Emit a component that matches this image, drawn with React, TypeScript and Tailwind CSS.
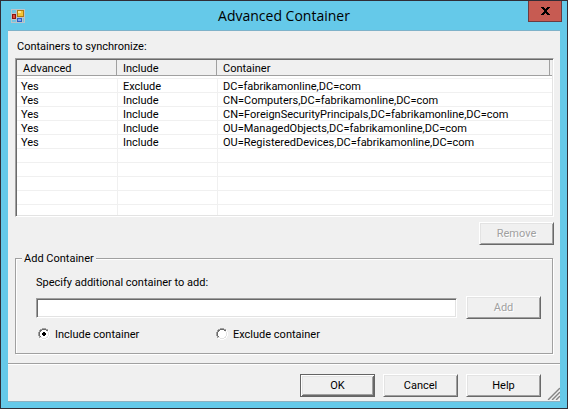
import { useState } from "react";
import type { ButtonHTMLAttributes } from "react";

const rows = [
  ["Yes", "Exclude", "DC=fabrikamonline,DC=com"],
  ["Yes", "Include", "CN=Computers,DC=fabrikamonline,DC=com"],
  ["Yes", "Include", "CN=ForeignSecurityPrincipals,DC=fabrikamonline,DC=com"],
  ["Yes", "Include", "OU=ManagedObjects,DC=fabrikamonline,DC=com"],
  ["Yes", "Include", "OU=RegisteredDevices,DC=fabrikamonline,DC=com"],
  ["", "", ""],
  ["", "", ""],
  ["", "", ""],
  ["", "", ""],
];

const raised =
  "border border-t-white border-l-white border-r-[#696969] border-b-[#696969] shadow-[inset_1px_1px_0_#e3e3e3,inset_-1px_-1px_0_#a0a0a0]";
const raisedDefault =
  "border border-[#646464] shadow-[inset_1px_1px_0_#ffffff,inset_-1px_-1px_0_#696969,inset_2px_2px_0_#e3e3e3,inset_-2px_-2px_0_#a0a0a0]";
const sunken =
  "border border-t-[#a0a0a0] border-l-[#a0a0a0] border-r-white border-b-white shadow-[inset_1px_1px_0_#696969,inset_-1px_-1px_0_#e3e3e3]";

function PushButton({
  primary = false,
  children,
  ...rest
}: ButtonHTMLAttributes<HTMLButtonElement> & { primary?: boolean }) {
  return (
    <button
      type="button"
      className={`flex h-[23px] w-[75px] shrink-0 items-center justify-center bg-[#f0f0f0] disabled:text-[#a0a0a0] disabled:[text-shadow:1px_1px_0_#ffffff] ${
        primary ? raisedDefault : raised
      }`}
      {...rest}
    >
      {children}
    </button>
  );
}

function Radio({
  label,
  checked,
  onSelect,
}: {
  label: string;
  checked: boolean;
  onSelect: () => void;
}) {
  return (
    <label className="relative flex w-[178px] items-center gap-1">
      <input
        type="radio"
        name="mode"
        checked={checked}
        onChange={onSelect}
        className="absolute inset-y-0 left-0 w-3 appearance-none"
      />
      <svg width="12" height="12" viewBox="0 0 12 12" shapeRendering="crispEdges" aria-hidden="true">
        <path d="M4 2h4v1h1v1h1v4h-1v1h-1v1h-4v-1h-1v-1h-1v-4h1v-1h1z" fill="#ffffff" />
        <path d="M4 0h4v1h-4zM2 1h2v1h-2zM8 1h2v1h-2zM1 2h1v2h-1zM0 4h1v4h-1zM1 8h1v2h-1z" fill="#a0a0a0" />
        <path d="M4 1h4v1h-4zM2 2h2v1h-2zM8 2h2v1h-2zM2 3h1v1h-1zM1 4h1v4h-1zM2 8h1v1h-1z" fill="#696969" />
        <path d="M9 3h1v1h-1zM10 4h1v4h-1zM9 8h1v1h-1zM2 9h2v1h-2zM8 9h2v1h-2zM4 10h4v1h-4z" fill="#e3e3e3" />
        <path d="M10 2h1v2h-1zM11 4h1v4h-1zM10 8h1v2h-1zM2 10h2v1h-2zM8 10h2v1h-2zM4 11h4v1h-4z" fill="#ffffff" />
        {checked && <path d="M5 4h2v1h1v2h-1v1h-2v-1h-1v-2h1z" fill="#000000" />}
      </svg>
      <span className="pt-0.5 pl-px leading-3">{label}</span>
    </label>
  );
}

function FormIcon() {
  return (
    <svg width="14" height="14" viewBox="0 0 14 14" shapeRendering="crispEdges" aria-hidden="true">
      <path d="M0 0h14v14h-14z" fill="#bcc3c8" />
      <path d="M1 1h4v3h-4zM1 11h4v2h-4zM12 9h1v4h-1z" fill="#74c4e0" />
      <path d="M6 1h7v7h-7z" fill="#b07a10" />
      <path d="M7 2h5v5h-5z" fill="#f5c535" />
      <path d="M7 2h3v2h-3z" fill="#ffe790" />
      <path d="M1 5h4v5h-4z" fill="#8c1210" />
      <path d="M2 6h2v3h-2z" fill="#dd4a38" />
      <path d="M6 9h5v4h-5z" fill="#2c5cc4" />
      <path d="M7 10h3v2h-3z" fill="#79a8f4" />
    </svg>
  );
}

export default function App() {
  const [mode, setMode] = useState("include");

  return (
    <div className="flex min-h-screen w-full flex-col border border-[#302d36] bg-[#65c9e9] px-[7px] pb-1.5 font-[Roboto,'Liberation_Sans',sans-serif] text-[11px] leading-[14px] text-black">
      <header className="grid h-[29px] grid-cols-[1fr_auto_1fr] items-center">
        <span className="pl-[3px]">
          <FormIcon />
        </span>
        <h1 className="font-['Open_Sans',sans-serif] text-[14px] leading-5">
          Advanced Container
        </h1>
        <button
          type="button"
          aria-label="Close"
          className="-mr-0.5 flex h-[21px] w-[34px] items-center justify-center self-start justify-self-end border border-t-0 border-[#6b3a40] bg-[#c75b52]"
        >
          <svg width="9" height="8" viewBox="0 0 9 8" shapeRendering="crispEdges" aria-hidden="true">
            <path
              d="M0 0h3v1h-3zM6 0h3v1h-3zM1 1h3v1h-3zM5 1h3v1h-3zM2 2h5v1h-5zM3 3h3v2h-3zM2 5h5v1h-5zM1 6h3v1h-3zM5 6h3v1h-3zM0 7h3v1h-3zM6 7h3v1h-3z"
              fill="#000000"
            />
          </svg>
        </button>
      </header>

      <main className="flex grow flex-col border-y border-t-[#7fb2c9] border-b-[#8fb0c0] bg-[#f0f0f0]">
        <section className="flex flex-col px-[7px] pt-[9px]">
          <h2 id="containers" className="pl-0.5">
            Containers to synchronize:
          </h2>
          <div className={`mt-1 mr-[-1px] bg-white p-px ${sunken}`}>
            <table aria-labelledby="containers" className="w-full table-fixed border-separate border-spacing-0 text-left">
              <colgroup>
                <col className="w-[100px]" />
                <col className="w-[100px]" />
                <col />
                <col className="w-0.5" />
              </colgroup>
              <thead>
                <tr className="h-4 leading-3">
                  {["Advanced", "Include", "Container"].map((name) => (
                    <th
                      key={name}
                      scope="col"
                      className="border-r border-b border-[#a0a0a0] bg-[#f0f0f0] p-0 pt-0.5 pl-1.5 font-normal"
                    >
                      {name}
                    </th>
                  ))}
                  <td className="border-b border-[#a0a0a0] bg-[#f0f0f0] p-0" />
                </tr>
                <tr className="h-[3px]">
                  <td colSpan={4} className="border-b border-[#f0f0f0] p-0" />
                </tr>
              </thead>
              <tbody>
                {rows.map(([advanced, include, container], i) => (
                  <tr key={i} className="h-3.5 leading-[11px]">
                    <td className="border-b border-[#f0f0f0] p-0 pt-0.5 pl-1">{advanced}</td>
                    <td className="border-b border-l border-[#f0f0f0] p-0 pt-0.5 pl-[5px]">{include}</td>
                    <td colSpan={2} className="border-b border-l border-[#f0f0f0] p-0 pt-0.5 pl-[5px]">
                      {container}
                    </td>
                  </tr>
                ))}
                <tr className="h-2.5">
                  <td className="p-0" />
                  <td className="border-l border-[#f0f0f0] p-0" />
                  <td colSpan={2} className="border-l border-[#f0f0f0] p-0" />
                </tr>
              </tbody>
            </table>
          </div>
          <div className="mt-[5px] mr-[-1px] flex justify-end">
            <PushButton disabled>Remove</PushButton>
          </div>
        </section>

        <fieldset className="mx-[7px] mt-1.5 border border-[#a0a0a0] px-5 pb-3 shadow-[1px_1px_0_#ffffff,inset_1px_1px_0_#ffffff]">
          <legend className="-ml-3.5 bg-[#f0f0f0] px-0.5 pt-0.5 leading-3">Add Container</legend>
          <label htmlFor="extra" className="mt-[11px] block">
            Specify additional container to add:
          </label>
          <div className="mt-1.5 mr-[-9px] flex items-center gap-[9px]">
            <input id="extra" type="text" className={`h-5 min-w-0 grow bg-white px-1 outline-none ${sunken}`} />
            <PushButton disabled>Add</PushButton>
          </div>
          <div className="mt-2 flex pl-0.5">
            <Radio label="Include container" checked={mode === "include"} onSelect={() => setMode("include")} />
            <Radio label="Exclude container" checked={mode === "exclude"} onSelect={() => setMode("exclude")} />
          </div>
        </fieldset>

        <footer className="relative mt-[9px] flex grow items-start justify-end gap-2 border-t border-[#a0a0a0] pt-2.5 pr-[19px] pb-1 shadow-[inset_0_1px_0_#ffffff]">
          <PushButton primary>OK</PushButton>
          <PushButton>Cancel</PushButton>
          <PushButton>Help</PushButton>
          <svg
            className="absolute right-0 bottom-px"
            width="13"
            height="13"
            viewBox="0 0 13 13"
            fill="none"
            aria-hidden="true"
          >
            <path d="M0 13L13 0M4 13L13 4M8 13L13 8" stroke="#ffffff" strokeWidth="1" />
            <path d="M1 13L13 1M5 13L13 5M9 13L13 9" stroke="#858585" strokeWidth="1.5" />
          </svg>
        </footer>
      </main>
    </div>
  );
}
